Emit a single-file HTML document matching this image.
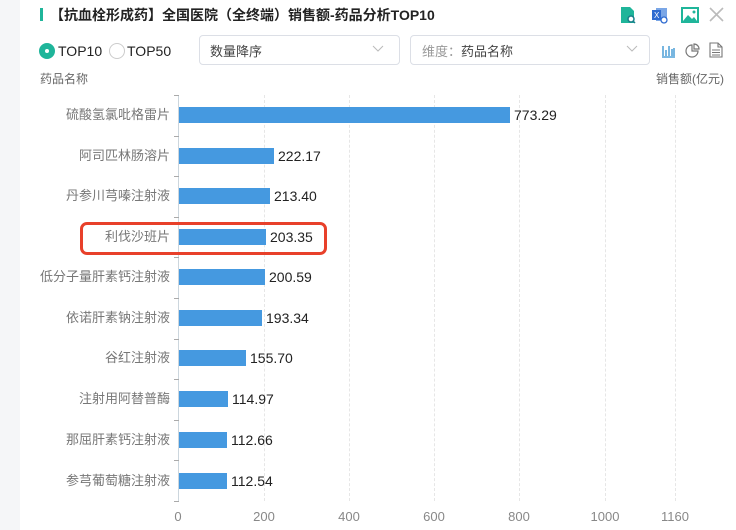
<!DOCTYPE html>
<html><head><meta charset="utf-8"><style>
*{margin:0;padding:0;box-sizing:border-box}
body{width:736px;height:530px;background:#fff;position:relative;overflow:hidden;font-family:"Liberation Sans","Noto Sans CJK SC",sans-serif}
.a{position:absolute}
.lab{position:absolute;right:566px;font-size:13px;color:#777;white-space:nowrap;line-height:16px}
.bar{position:absolute;left:179px;height:16px;background:#4599e0}
.val{position:absolute;font-size:14px;color:#222;line-height:16px}
.grid{position:absolute;top:95px;height:406px;border-left:1px dashed #e6e6e6}
.tick{position:absolute;left:174px;width:5px;height:1px;background:#aaa}
.xl{position:absolute;top:509px;font-size:13px;color:#888;transform:translateX(-50%)}
</style></head><body>
<div class="a" style="left:0;top:0;width:20px;height:530px;background:#f5f6f8"></div>
<div class="a" style="left:40px;top:8px;width:3px;height:13px;background:#1fb59a"></div>
<div class="a" style="left:50px;top:5px;font-size:14px;font-weight:bold;color:#222">【抗血栓形成药】全国医院（全终端）销售额-药品分析TOP10</div>
<svg class="a" style="left:618px;top:5px" width="20" height="20" viewBox="0 0 20 20"><path d="M3 2h9l4 4v12H3z" fill="#1fb59a"/><circle cx="13" cy="14" r="3" fill="#fff" stroke="#1a7f8a" stroke-width="1.5"/><path d="M15 16l2 2" stroke="#1a7f8a" stroke-width="1.5"/></svg>
<svg class="a" style="left:650px;top:5px" width="20" height="20" viewBox="0 0 20 20"><rect x="6" y="3" width="11" height="13" fill="#7aa6e6"/><rect x="2" y="5" width="9" height="10" fill="#2f6bd0"/><text x="4" y="13" font-size="8" fill="#fff" font-family="Liberation Sans">X</text><circle cx="14" cy="15" r="3" fill="#fff" stroke="#2f6bd0" stroke-width="1.3"/></svg>
<svg class="a" style="left:680px;top:5px" width="20" height="20" viewBox="0 0 20 20"><rect x="2" y="3" width="16" height="14" fill="none" stroke="#1fb59a" stroke-width="2"/><path d="M3 16l5-6 4 4 2-2 3 4z" fill="#1fb59a"/><circle cx="14" cy="7" r="1.5" fill="#1fb59a"/></svg>
<svg class="a" style="left:709px;top:7px" width="15" height="15" viewBox="0 0 15 15"><path d="M1 1l13 13M14 1L1 14" stroke="#bbb" stroke-width="1.6"/></svg>
<div class="a" style="left:39px;top:43px;width:16px;height:16px;border-radius:50%;background:#1fb59a"></div>
<div class="a" style="left:45px;top:49px;width:4px;height:4px;border-radius:50%;background:#fff"></div>
<div class="a" style="left:58px;top:43px;font-size:14px;color:#222">TOP10</div>
<div class="a" style="left:109px;top:43px;width:16px;height:16px;border-radius:50%;border:1px solid #ccc"></div>
<div class="a" style="left:127px;top:43px;font-size:14px;color:#222">TOP50</div>
<div class="a" style="left:199px;top:35px;width:201px;height:30px;border:1px solid #dcdfe6;border-radius:4px"></div>
<div class="a" style="left:210px;top:41px;font-size:13px;color:#444">数量降序</div>
<svg class="a" style="left:372px;top:45px" width="12" height="8" viewBox="0 0 12 8"><path d="M1 1l5 5 5-5" fill="none" stroke="#bbb"/></svg>
<div class="a" style="left:410px;top:35px;width:240px;height:30px;border:1px solid #dcdfe6;border-radius:4px"></div>
<div class="a" style="left:422px;top:41px;font-size:13px;color:#999">维度：<span style="color:#444">药品名称</span></div>
<svg class="a" style="left:626px;top:45px" width="12" height="8" viewBox="0 0 12 8"><path d="M1 1l5 5 5-5" fill="none" stroke="#bbb"/></svg>
<svg class="a" style="left:661px;top:43px" width="15" height="15" viewBox="0 0 15 15"><path d="M1 14h13M2 3v10M5 7v6M8 3v10M11 6v7M13 5v8" stroke="#2f8fd0" stroke-width="1.3" fill="none"/></svg>
<svg class="a" style="left:685px;top:43px" width="15" height="15" viewBox="0 0 15 15"><path d="M7 2a6 6 0 1 0 6 6H7z" fill="none" stroke="#777" stroke-width="1.2"/><path d="M9 1v5h5a5 5 0 0 0-5-5z" fill="none" stroke="#777" stroke-width="1.2"/></svg>
<svg class="a" style="left:709px;top:42px" width="14" height="16" viewBox="0 0 14 16"><path d="M1 1h8l4 4v10H1z M9 1v4h4 M3 8h8M3 10.5h8M3 13h8" fill="none" stroke="#777" stroke-width="1.1"/></svg>
<div class="a" style="left:40px;top:70px;font-size:12px;color:#666">药品名称</div>
<div class="a" style="left:656px;top:70px;font-size:12px;color:#666">销售额(亿元)</div>
<div class="grid" style="left:264px"></div><div class="grid" style="left:349px"></div><div class="grid" style="left:434px"></div><div class="grid" style="left:519px"></div><div class="grid" style="left:605px"></div><div class="grid" style="left:675px"></div>
<div class="a" style="left:178px;top:95px;width:1px;height:407px;background:#ccd6dd"></div>
<div class="tick" style="top:95px"></div><div class="tick" style="top:136px"></div><div class="tick" style="top:176px"></div><div class="tick" style="top:217px"></div><div class="tick" style="top:257px"></div><div class="tick" style="top:298px"></div><div class="tick" style="top:339px"></div><div class="tick" style="top:379px"></div><div class="tick" style="top:420px"></div><div class="tick" style="top:460px"></div><div class="tick" style="top:501px"></div>
<div class="lab" style="top:107px">硫酸氢氯吡格雷片</div><div class="bar" style="top:107px;width:331px"></div><div class="val" style="left:514px;top:107px">773.29</div>
<div class="lab" style="top:148px">阿司匹林肠溶片</div><div class="bar" style="top:148px;width:95px"></div><div class="val" style="left:278px;top:148px">222.17</div>
<div class="lab" style="top:188px">丹参川芎嗪注射液</div><div class="bar" style="top:188px;width:91px"></div><div class="val" style="left:274px;top:188px">213.40</div>
<div class="lab" style="top:229px">利伐沙班片</div><div class="bar" style="top:229px;width:87px"></div><div class="val" style="left:270px;top:229px">203.35</div>
<div class="lab" style="top:269px">低分子量肝素钙注射液</div><div class="bar" style="top:269px;width:86px"></div><div class="val" style="left:269px;top:269px">200.59</div>
<div class="lab" style="top:310px">依诺肝素钠注射液</div><div class="bar" style="top:310px;width:83px"></div><div class="val" style="left:266px;top:310px">193.34</div>
<div class="lab" style="top:350px">谷红注射液</div><div class="bar" style="top:350px;width:67px"></div><div class="val" style="left:250px;top:350px">155.70</div>
<div class="lab" style="top:391px">注射用阿替普酶</div><div class="bar" style="top:391px;width:49px"></div><div class="val" style="left:232px;top:391px">114.97</div>
<div class="lab" style="top:432px">那屈肝素钙注射液</div><div class="bar" style="top:432px;width:48px"></div><div class="val" style="left:231px;top:432px">112.66</div>
<div class="lab" style="top:473px">参芎葡萄糖注射液</div><div class="bar" style="top:473px;width:48px"></div><div class="val" style="left:231px;top:473px">112.54</div>
<div class="a" style="left:80px;top:222px;width:247px;height:33px;border:3px solid #e8402a;border-radius:7px"></div>
<div class="xl" style="left:178px">0</div><div class="xl" style="left:264px">200</div><div class="xl" style="left:349px">400</div><div class="xl" style="left:434px">600</div><div class="xl" style="left:519px">800</div><div class="xl" style="left:605px">1000</div><div class="xl" style="left:675px">1160</div>
</body></html>
